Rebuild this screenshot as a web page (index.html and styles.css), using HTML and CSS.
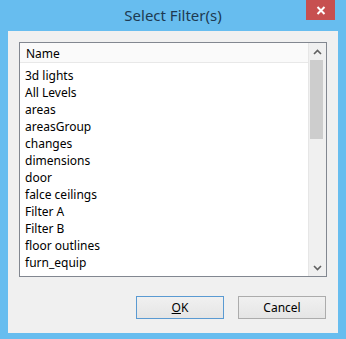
FILE: index.html
```html
<!DOCTYPE html>
<html lang="en">
<head>
    <meta charset="UTF-8">
    <title>Select Filter(s)</title>
    <link rel="stylesheet" href="styles.css">
</head>
<body>
    <div class="window">
        <div class="title-bar">
            <span></span>
            <span class="title">Select Filter(s)</span>
            <button class="close-btn">
                <svg width="10" height="9" viewBox="0 0 10 9">
                    <path d="M1.5 1 L8.5 8 M8.5 1 L1.5 8" stroke="#fff" stroke-width="2"/>
                </svg>
            </button>
        </div>
        <div class="client">
            <div class="list-box">
                <div class="list-main">
                    <div class="list-header">Name</div>
                    <ul class="items">
                        <li>3d lights</li>
                        <li>All Levels</li>
                        <li>areas</li>
                        <li>areasGroup</li>
                        <li>changes</li>
                        <li>dimensions</li>
                        <li>door</li>
                        <li>falce ceilings</li>
                        <li>Filter A</li>
                        <li>Filter B</li>
                        <li>floor outlines</li>
                        <li>furn_equip</li>
                    </ul>
                </div>
                <div class="scrollbar">
                    <div class="arrow">
                        <svg width="9" height="6" viewBox="0 0 9 6">
                            <path d="M1 5 L4.5 1.5 L8 5" fill="none" stroke="#606060" stroke-width="1.6"/>
                        </svg>
                    </div>
                    <div class="track">
                        <div class="thumb"></div>
                    </div>
                    <div class="arrow">
                        <svg width="9" height="6" viewBox="0 0 9 6">
                            <path d="M1 1 L4.5 4.5 L8 1" fill="none" stroke="#606060" stroke-width="1.6"/>
                        </svg>
                    </div>
                </div>
            </div>
            <div class="buttons">
                <button class="btn default"><u>O</u>K</button>
                <button class="btn">Cancel</button>
            </div>
        </div>
    </div>
</body>
</html>
```

FILE: styles.css
```css
body {
    margin: 0;
    background-color: #67bdef;
    font-family: "Noto Sans", "Open Sans", sans-serif;
    font-size: 12px;
    color: #000;
}
.window {
    width: 346px;
    height: 339px;
}
.title-bar {
    display: grid;
    grid-template-columns: 1fr auto 1fr;
    height: 31px;
}
.title {
    font-size: 15px;
    color: #1d3a52;
    line-height: 31px;
}
.close-btn {
    justify-self: end;
    width: 29px;
    height: 20px;
    margin-right: 11px;
    padding: 0;
    border: none;
    background-color: #c75050;
    display: flex;
    align-items: center;
    justify-content: center;
}
.client {
    margin: 0 8px;
    height: 302px;
    box-sizing: border-box;
    padding: 11px 11px 0 11px;
    background-color: #f0f0f0;
}
.list-box {
    display: flex;
    height: 235px;
    box-sizing: border-box;
    border: 1px solid #828790;
    background-color: #fff;
}
.list-main {
    flex: 1;
}
.list-header {
    height: 20px;
    box-sizing: border-box;
    padding-left: 6px;
    line-height: 21px;
    background-color: #fafafa;
    border-bottom: 1px solid #e8e8e8;
}
.items {
    list-style: none;
    margin: 0;
    padding: 4px 0 0 5px;
}
.items li {
    height: 17px;
    line-height: 17px;
}
.scrollbar {
    width: 17px;
    display: flex;
    flex-direction: column;
    background-color: #f0f0f0;
    border-left: 1px solid #e6e6e6;
}
.arrow {
    height: 17px;
    display: flex;
    align-items: center;
    justify-content: center;
}
.track {
    flex: 1;
    padding: 0 3px 0 1px;
}
.thumb {
    height: 79px;
    background-color: #cdcdcd;
}
.buttons {
    display: flex;
    justify-content: flex-end;
    gap: 14px;
    margin-top: 19px;
    padding-right: 1px;
}
.btn {
    width: 88px;
    height: 23px;
    padding: 0;
    border: 1px solid #acacac;
    background: linear-gradient(#f0f0f0, #e5e5e5);
    font-family: "Noto Sans", "Open Sans", sans-serif;
    font-size: 12px;
    color: #000;
}
.btn.default {
    border-color: #5a9ad2;
}
```
